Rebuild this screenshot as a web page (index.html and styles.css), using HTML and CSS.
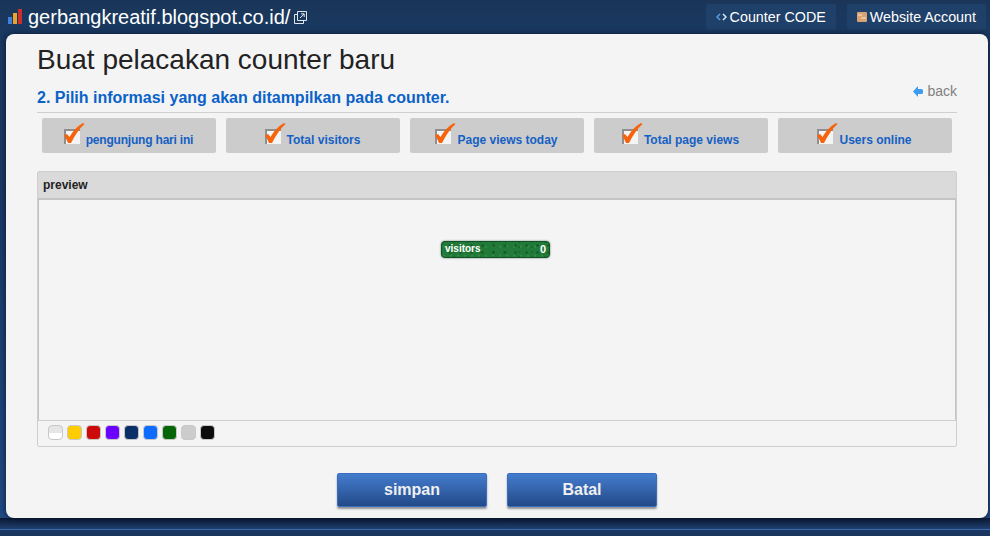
FILE: index.html
```html
<!DOCTYPE html>
<html lang="en">
<head>
    <meta charset="UTF-8">
    <title>Buat pelacakan counter baru</title>
    <link rel="stylesheet" href="styles.css">
</head>
<body>
    <svg width="0" height="0" class="defs">
        <symbol id="check" viewBox="0 0 22 22">
            <rect x="1" y="6" width="16" height="15" fill="#f4f4f4"/>
            <path d="M1 6h16v2H3v13H1z" fill="#8f8f8f"/>
            <path d="M1 12.500l3-1.500 2.500 3C10 8 14 3.500 20 0l1.500 1C16 6 11.500 13 8 20H5C4 17.500 2.500 14.500 1 12.500z" fill="#f7630c"/>
        </symbol>
    </svg>

    <header class="topbar">
        <div class="site">
            <svg class="site-bars" width="15" height="15" viewBox="0 0 15 15">
                <rect x="0" y="8" width="4" height="7" fill="#3f7fe0"/>
                <rect x="5" y="4" width="4" height="11" fill="#eda32a"/>
                <rect x="10" y="0" width="4" height="15" fill="#c9302c"/>
            </svg>
            <span class="site-name">gerbangkreatif.blogspot.co.id/</span>
            <svg class="site-open" width="13" height="13" viewBox="0 0 13 13" fill="none" stroke="#dfe6ee">
                <path d="M3.500 3.500h-3v9h9v-3"/>
                <path d="M3.500.5h9v9h-9z"/>
                <path d="M6 7l4-4M7 2.800h3.200V6"/>
            </svg>
        </div>
        <nav class="top-links">
            <a class="top-link">
                <svg width="11" height="8" viewBox="0 0 11 8" fill="none" stroke-width="1.500">
                    <path d="M4 1L1 4l3 3" stroke="#5b9be8"/>
                    <path d="M7 1l3 3-3 3" stroke="#d5e6fa"/>
                </svg>
                Counter CODE
            </a>
            <a class="top-link">
                <svg width="10" height="10" viewBox="0 0 10 10">
                    <rect width="10" height="10" rx="1" fill="#d9a273"/>
                    <path d="M1 3h4M4 6h5" stroke="#fbe6d0"/>
                </svg>
                Website Account
            </a>
        </nav>
    </header>

    <main class="panel">
        <h1 class="title">Buat pelacakan counter baru</h1>
        <div class="step-row">
            <h2 class="step">2. Pilih informasi yang akan ditampilkan pada counter.</h2>
            <a class="back">
                <svg width="10" height="11" viewBox="0 0 10 11"><path d="M5 0L0 5.500 5 11V8h3.500Q10 8 10 6.500v-2Q10 3 8.500 3H5z" fill="#3d9bf0"/></svg>
                back
            </a>
        </div>

        <div class="options">
            <label class="option narrow"><svg class="tick"><use href="#check"/></svg><span>pengunjung hari ini</span></label>
            <label class="option"><svg class="tick"><use href="#check"/></svg><span>Total visitors</span></label>
            <label class="option"><svg class="tick"><use href="#check"/></svg><span>Page views today</span></label>
            <label class="option"><svg class="tick"><use href="#check"/></svg><span>Total page views</span></label>
            <label class="option"><svg class="tick"><use href="#check"/></svg><span>Users online</span></label>
        </div>

        <section class="preview">
            <div class="preview-head">preview</div>
            <div class="preview-body">
                <div class="counter"><span>visitors</span><span class="counter-num">0</span></div>
            </div>
            <div class="swatches">
                <span class="swatch white"></span>
                <span class="swatch yellow"></span>
                <span class="swatch red"></span>
                <span class="swatch purple"></span>
                <span class="swatch navy"></span>
                <span class="swatch blue"></span>
                <span class="swatch green"></span>
                <span class="swatch grey"></span>
                <span class="swatch black"></span>
            </div>
        </section>

        <div class="actions">
            <button class="btn">simpan</button>
            <button class="btn">Batal</button>
        </div>
    </main>

    <div class="footer-shade"></div>
    <div class="footer"></div>
</body>
</html>
```

FILE: styles.css
```css
/* CSS */
html, body {
    margin: 0;
    height: 536px;
    overflow: hidden;
}

body {
    background: linear-gradient(to bottom, #1a3860 0%, #1a3a66 40%, #214b86 100%);
    font-family: "Liberation Sans", Arial, sans-serif;
}

.defs {
    position: absolute;
}

.topbar {
    height: 34px;
    display: flex;
    justify-content: space-between;
    background: linear-gradient(to bottom, #1a3558, #1a3a62);
}

.site {
    display: flex;
    align-items: center;
    padding: 0 0 0 8px;
    height: 34px;
}

.site-bars {
    margin: -2px 5px 0 0;
}

.site-name {
    color: #fff;
    font-size: 20px;
    line-height: 34px;
}

.site-open {
    margin: 0 0 0 4px;
}

.top-links {
    display: flex;
    gap: 11px;
    padding: 4px 4px 0 0;
}

.top-link {
    height: 26px;
    display: flex;
    align-items: center;
    gap: 3px;
    padding: 0 10px;
    background: #1f4069;
    border-radius: 2px;
    color: #fff;
    font-size: 14.3px;
}

.panel {
    height: 484px;
    box-sizing: border-box;
    margin: 0 2px 0 6px;
    padding: 10px 31px 0;
    background: #f4f4f4;
    border-radius: 8px;
    box-shadow: 0 0 6px rgba(5, 15, 35, 0.8);
    position: relative;
}

.title {
    margin: 0;
    font-size: 28px;
    font-weight: normal;
    line-height: 31px;
    color: #222;
}

.step-row {
    display: flex;
    justify-content: space-between;
    height: 25px;
    margin-top: 12px;
    border-bottom: 1px solid #cfcfcf;
}

.step {
    margin: 0;
    font-size: 16px;
    line-height: 21px;
    color: #0a62c8;
}

.back {
    display: flex;
    align-items: center;
    gap: 4px;
    height: 18px;
    margin-top: -5px;
    color: #808080;
    font-size: 14px;
}

.options {
    display: flex;
    gap: 10px;
    padding: 5px 5px 0;
}

.option {
    flex: 1;
    height: 35px;
    box-sizing: border-box;
    padding-right: 2px;
    display: flex;
    justify-content: center;
    background: #cccccc;
    border-radius: 2px;
    color: #1560c4;
    font-size: 12px;
    font-weight: bold;
}

.option.narrow {
    letter-spacing: -0.2px;
}

.option span {
    line-height: 16px;
    margin-top: 14px;
}

.tick {
    width: 22px;
    height: 22px;
    margin: 5px 1px 0 0;
    flex: none;
}

.preview {
    margin-top: 18px;
    height: 276px;
    box-sizing: border-box;
    border: 1px solid #cfcfcf;
    border-radius: 2px;
}

.preview-head {
    height: 26px;
    background: #dadada;
    color: #222;
    font-size: 12px;
    font-weight: bold;
    line-height: 26px;
    padding-left: 5px;
}

.preview-body {
    height: 223px;
    box-sizing: border-box;
    border: 1px solid #c4c4c4;
    border-top-width: 2px;
    border-bottom-color: #cfcfcf;
    display: flex;
    justify-content: center;
    padding: 41px 3px 0 0;
}

.counter {
    width: 109px;
    height: 17px;
    box-sizing: border-box;
    display: flex;
    justify-content: space-between;
    padding: 0 3px;
    background:
        radial-gradient(circle at 60% 50%, rgba(0, 50, 15, 0.55) 0, transparent 2px) 1px 0 / 11px 7px,
        radial-gradient(circle at 30% 30%, rgba(110, 190, 120, 0.4) 0, transparent 1.5px) 0 2px / 7px 9px,
        radial-gradient(circle at 70% 80%, rgba(0, 70, 25, 0.5) 0, transparent 1.5px) 3px 1px / 13px 5px,
        #217a37;
    border: 1px solid #14502a;
    border-radius: 4px;
    box-shadow: 0 0 2px rgba(0, 60, 20, 0.7);
    color: #fff;
    font-size: 10px;
    font-weight: bold;
    line-height: 14px;
}

.counter-num {
    font-size: 11px;
}

.swatches {
    display: flex;
    gap: 4px;
    padding: 4px 0 0 10px;
}

.swatch {
    width: 15px;
    height: 15px;
    box-sizing: border-box;
    border: 1px solid #c8c8c8;
    border-radius: 4px;
}

.white { background: linear-gradient(#e6e6e6 50%, #fff 50%); }
.yellow { background: #ffcc00; }
.red { background: #cc0a0a; }
.purple { background: #6a00ff; }
.navy { background: #0b3068; }
.blue { background: #0d6cff; }
.green { background: #056605; }
.grey { background: #cccccc; }
.black { background: #0c0c0c; }

.actions {
    display: flex;
    justify-content: center;
    gap: 20px;
    margin-top: 26px;
}

.btn {
    width: 150px;
    height: 34px;
    padding: 0;
    background: linear-gradient(to bottom, #447cce, #234a88);
    border: 1px solid #3a6dbe;
    border-radius: 2px;
    box-shadow: 0 2px 2px rgba(0, 0, 0, 0.4);
    color: #f0f0f0;
    font-family: inherit;
    font-size: 16px;
    font-weight: bold;
}

.footer-shade {
    height: 11px;
    background: linear-gradient(to bottom, #0b1a33, #1f3f70);
}

.footer {
    height: 7px;
    background: #1a3560;
    border-top: 1px solid #3a6cb0;
}
```
